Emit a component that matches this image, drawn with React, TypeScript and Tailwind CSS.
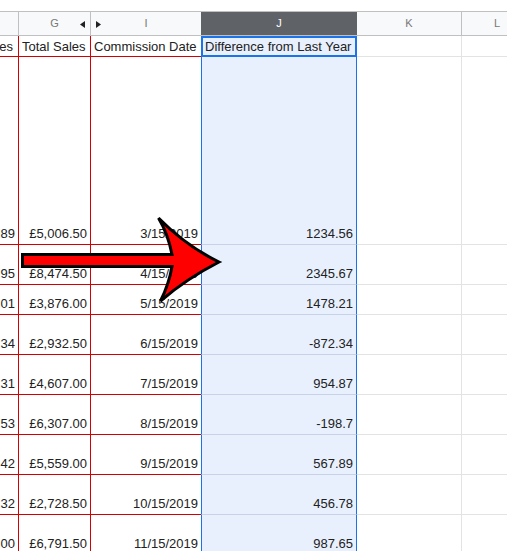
import React from "react";

const rows: { h: string; f: string; g: string; i: string; j: string }[] = [
  { h: "h-[188px]", f: "89", g: "£5,006.50", i: "3/15/2019", j: "1234.56" },
  { h: "h-[40px]", f: "95", g: "£8,474.50", i: "4/15/2019", j: "2345.67" },
  { h: "h-[30px]", f: "01", g: "£3,876.00", i: "5/15/2019", j: "1478.21" },
  { h: "h-[40px]", f: "34", g: "£2,932.50", i: "6/15/2019", j: "-872.34" },
  { h: "h-[40px]", f: "31", g: "£4,607.00", i: "7/15/2019", j: "954.87" },
  { h: "h-[40px]", f: "53", g: "£6,307.00", i: "8/15/2019", j: "-198.7" },
  { h: "h-[40px]", f: "42", g: "£5,559.00", i: "9/15/2019", j: "567.89" },
  { h: "h-[40px]", f: "32", g: "£2,728.50", i: "10/15/2019", j: "456.78" },
  { h: "h-[40px]", f: "00", g: "£6,791.50", i: "11/15/2019", j: "987.65" },
];

function DataRow({ r }: { r: (typeof rows)[number] }) {
  return (
    <div className={`flex ${r.h}`}>
      <div className="w-[19px] shrink-0 flex items-end justify-end pr-[3px] pb-[3px] border-r border-b border-[#d20000]">
        {r.f}
      </div>
      <div className="w-[72px] shrink-0 flex items-end justify-end pr-[3px] pb-[3px] border-r border-b border-[#d20000]">
        {r.g}
      </div>
      <div className="w-[110px] shrink-0 flex items-end justify-end pr-[3px] pb-[3px] border-b border-[#d20000]">
        {r.i}
      </div>
      <div className="w-[156px] shrink-0 flex items-end justify-end pr-[3px] pb-[3px] bg-[#e8f0fe] border-x border-x-[#1a73e8] border-b border-b-[#c7d2e8]">
        {r.j}
      </div>
      <div className="w-[105px] shrink-0 border-r border-b border-[#e2e3e3]" />
      <div className="flex-1 border-b border-[#e2e3e3]" />
    </div>
  );
}

export default function App() {
  return (
    <div
      className="relative w-[507px] h-[551px] overflow-hidden bg-white text-[13px] leading-[15px] text-[#222]"
      style={{ fontFamily: '"Liberation Sans", Arial, sans-serif' }}
    >
      <div className="h-[11px]" />
      {/* column header row */}
      <div className="flex h-[25px] border-y border-[#c0c0c0] bg-[#f8f9fa] text-[11px] text-[#777]">
        <div className="w-[19px] shrink-0 border-r border-[#c0c0c0]" />
        <div className="w-[72px] shrink-0 border-r border-[#c0c0c0] relative flex items-center justify-center">
          G
          <svg className="absolute right-[5px] top-[9px]" width="5" height="7" viewBox="0 0 5 7">
            <polygon points="5,0 5,7 0,3.5" fill="#222" />
          </svg>
        </div>
        <div className="w-[110px] shrink-0 relative flex items-center justify-center">
          I
          <svg className="absolute left-[5px] top-[9px]" width="5" height="7" viewBox="0 0 5 7">
            <polygon points="0,0 0,7 5,3.5" fill="#222" />
          </svg>
        </div>
        <div className="w-[156px] shrink-0 bg-[#5f6368] text-white flex items-center justify-center">J</div>
        <div className="w-[105px] shrink-0 border-r border-[#c0c0c0] flex items-center justify-center">K</div>
        <div className="flex-1 flex items-center pl-[32px]">L</div>
      </div>
      {/* label row */}
      <div className="flex h-[21px]">
        <div className="w-[19px] shrink-0 flex items-end justify-end overflow-hidden whitespace-nowrap pr-[5px] pb-[2px] border-r border-b border-[#d20000]">
          Sales
        </div>
        <div className="w-[72px] shrink-0 flex items-end pl-[3px] pb-[2px] whitespace-nowrap overflow-hidden border-r border-b border-[#d20000]">
          Total Sales
        </div>
        <div className="w-[110px] shrink-0 flex items-end pl-[3px] pb-[2px] whitespace-nowrap overflow-hidden border-b border-[#d20000]">
          Commission Date
        </div>
        <div className="w-[156px] shrink-0 flex items-end pl-[2px] pb-[1px] whitespace-nowrap overflow-hidden bg-[#e8f0fe] border-2 border-[#1a73e8]">
          Difference from Last Year
        </div>
        <div className="w-[105px] shrink-0 border-r border-b border-[#e2e3e3]" />
        <div className="flex-1 border-b border-[#e2e3e3]" />
      </div>
      {rows.map((r) => (
        <DataRow key={r.i} r={r} />
      ))}
      {/* red arrow overlay */}
      <svg
        className="absolute left-0 top-0 pointer-events-none"
        width="507"
        height="551"
        viewBox="0 0 507 551"
      >
        <path
          d="M22.5,254.5 L172,254.5 Q168,234 158.5,218 Q186,246 219,262 Q186,279 160.5,301 Q169,284 172,266.5 L22.5,266.5 Z"
          fill="#ff0000"
          stroke="#000"
          strokeWidth="3"
          strokeLinejoin="miter"
        />
      </svg>
    </div>
  );
}
